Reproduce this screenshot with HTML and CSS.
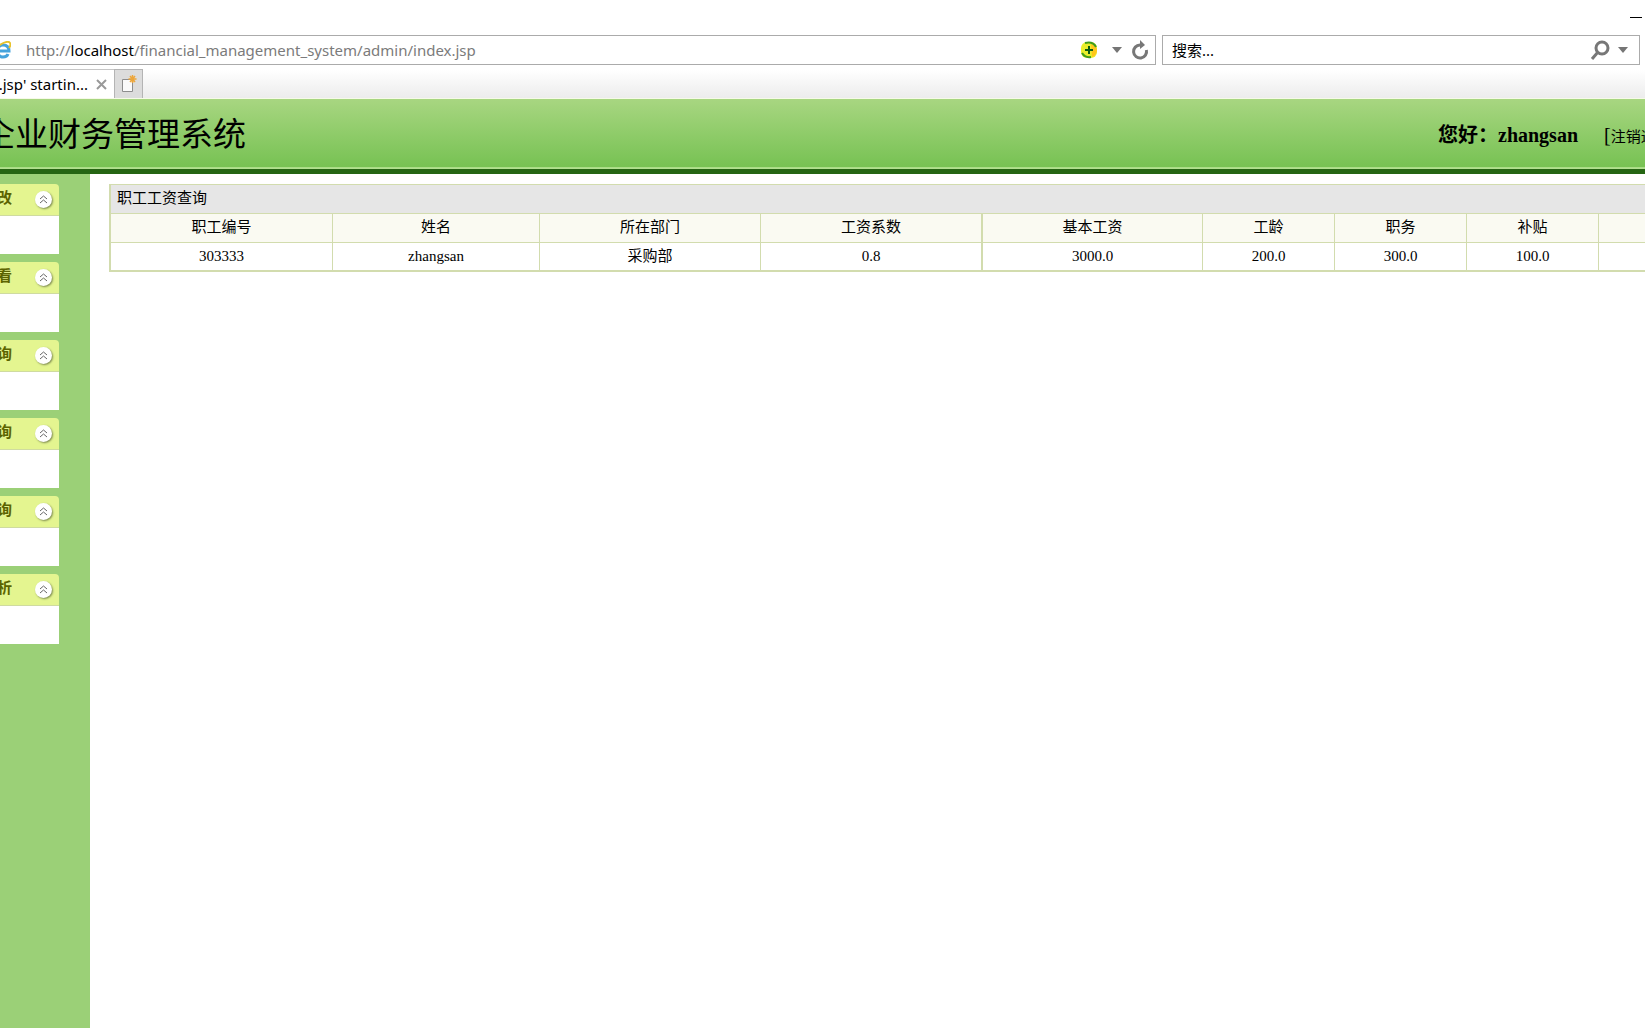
FILE: index.html
```html
<!DOCTYPE html>
<html lang="zh-CN">
<head>
<meta charset="utf-8">
<title>企业财务管理系统</title>
<link rel="stylesheet" href="styles.css">
</head>
<body>
<div class="window">
  <div class="titlebar">
    <button class="plain minimize" aria-label="最小化"></button>
  </div>
  <div class="toolbar">
    <div class="address">
      <svg class="ie" width="11" height="18" viewBox="0 0 11 18" aria-hidden="true">
        <path d="M-5 10H9Q9 4 3 4Q-2 4 -3 10Q-2 16 3 16Q7 16 8 13" fill="none" stroke="#46a3dc" stroke-width="3"/>
        <path d="M-3 6Q5 0 9 1Q12 3 9 7" fill="none" stroke="#e8c22c" stroke-width="2"/>
      </svg>
      <div class="url" role="textbox" aria-label="地址">http://<span class="host">localhost</span>/financial_management_system/admin/index.jsp</div>
      <button class="plain" aria-label="加速">
        <svg width="16" height="18" viewBox="0 0 16 18"><rect x="0" y="1" width="16" height="16" rx="6" fill="#e9ee2c"/><path d="M10 3Q16 5 16 10Q15 15 11 16Z" fill="#ffc61a"/><path d="M4 2Q12 0 15 6M1 12Q4 17 10 16" fill="none" stroke="#3f9c1c" stroke-width="2"/><path d="M8 5V13M4 9H12" stroke="#0c5c12" stroke-width="2"/></svg>
      </button>
      <button class="plain caret" aria-label="历史"><svg width="10" height="6" viewBox="0 0 10 6"><path d="M0 0H10L5 6Z" fill="#757575"/></svg></button>
      <button class="plain" aria-label="刷新">
        <svg width="18" height="20" viewBox="0 0 18 20"><path d="M9 5A6.500 6.500 0 1 0 15.400 10" fill="none" stroke="#777" stroke-width="3"/><path d="M9 0L14 5L9 9Z" fill="#777"/></svg>
      </button>
    </div>
    <form class="search">
      <input type="text" placeholder="搜索..." aria-label="搜索">
      <button class="plain" type="button" aria-label="搜索">
        <svg width="20" height="20" viewBox="0 0 20 20"><circle cx="12" cy="8" r="6" fill="none" stroke="#777" stroke-width="3"/><path d="M8 12L2 19" stroke="#777" stroke-width="3"/></svg>
      </button>
      <button class="plain" type="button" aria-label="搜索选项"><svg width="10" height="6" viewBox="0 0 10 6"><path d="M0 0H10L5 6Z" fill="#757575"/></svg></button>
    </form>
  </div>
  <div class="tabs">
    <div class="tab">
      <span>.jsp' startin...</span>
      <button class="plain" aria-label="关闭标签页"><svg width="11" height="11" viewBox="0 0 11 11"><path d="M1 1L10 10M10 1L1 10" stroke="#999" stroke-width="2"/></svg></button>
    </div>
    <button class="newtab" aria-label="新建标签页">
      <svg width="16" height="18" viewBox="0 0 16 18"><path d="M1.500 4.500H11.500V16.500H1.500Z" fill="#fafafa" stroke="#8d8d8d"/><path d="M11.500 0V8M7.500 4H15.500M9 1L14 7M14 1L9 7" stroke="#eda63a" stroke-width="1.500"/></svg>
    </button>
  </div>

  <header class="banner">
    <h1>企业财务管理系统</h1>
    <div class="user">
      <strong>您好：zhangsan</strong>
      <span class="session">[<a href="#">注销退出</a>]</span>
    </div>
  </header>

  <div class="page">
    <nav class="sidebar">
      <section class="panel"><h2>改</h2><button class="plain fold" aria-label="收起"><svg width="9" height="9" viewBox="0 0 9 9"><path d="M1 4L4.500 1L8 4M1 8L4.500 5L8 8"/></svg></button></section>
      <section class="panel"><h2>看</h2><button class="plain fold" aria-label="收起"><svg width="9" height="9" viewBox="0 0 9 9"><path d="M1 4L4.500 1L8 4M1 8L4.500 5L8 8"/></svg></button></section>
      <section class="panel"><h2>询</h2><button class="plain fold" aria-label="收起"><svg width="9" height="9" viewBox="0 0 9 9"><path d="M1 4L4.500 1L8 4M1 8L4.500 5L8 8"/></svg></button></section>
      <section class="panel"><h2>询</h2><button class="plain fold" aria-label="收起"><svg width="9" height="9" viewBox="0 0 9 9"><path d="M1 4L4.500 1L8 4M1 8L4.500 5L8 8"/></svg></button></section>
      <section class="panel"><h2>询</h2><button class="plain fold" aria-label="收起"><svg width="9" height="9" viewBox="0 0 9 9"><path d="M1 4L4.500 1L8 4M1 8L4.500 5L8 8"/></svg></button></section>
      <section class="panel"><h2>析</h2><button class="plain fold" aria-label="收起"><svg width="9" height="9" viewBox="0 0 9 9"><path d="M1 4L4.500 1L8 4M1 8L4.500 5L8 8"/></svg></button></section>
    </nav>
    <main>
      <table>
        <caption>职工工资查询</caption>
        <colgroup>
          <col class="wide"><col class="name"><col class="wide"><col class="wide"><col class="wide"><col class="narrow"><col class="narrow"><col class="narrow"><col>
        </colgroup>
        <thead>
          <tr><th>职工编号</th><th>姓名</th><th>所在部门</th><th>工资系数</th><th class="group">基本工资</th><th>工龄</th><th>职务</th><th>补贴</th><th></th></tr>
        </thead>
        <tbody>
          <tr><td>303333</td><td>zhangsan</td><td>采购部</td><td>0.8</td><td class="group">3000.0</td><td>200.0</td><td>300.0</td><td>100.0</td><td></td></tr>
        </tbody>
      </table>
    </main>
  </div>
</div>
</body>
</html>
```
FILE: styles.css
```css
* { box-sizing: border-box; }
body {
  margin: 0;
  background: #fff;
  color: #000;
  font-family: "Liberation Serif", "Noto Sans CJK SC", serif;
  font-size: 15px;
}
.window {
  display: flex;
  flex-direction: column;
  min-height: 100vh;
  overflow: hidden;
}
.plain {
  display: flex;
  align-items: center;
  justify-content: center;
  flex: none;
  padding: 0;
  border: 0;
  background: none;
}

/* browser chrome */
.titlebar {
  display: flex;
  justify-content: flex-end;
  height: 35px;
  padding: 17px 3px 0 0;
}
.minimize { width: 12px; height: 1px; background: #000; }
.toolbar {
  display: flex;
  gap: 6px;
  padding-right: 5px;
  font-family: "Noto Sans", "Noto Sans CJK SC", sans-serif;
}
.address, .search {
  display: flex;
  align-items: center;
  height: 30px;
  border: 1px solid #ababab;
}
.address {
  flex: 1149 1 0;
  min-width: 0;
  gap: 15px;
  padding-right: 6px;
  border-left: 0;
}
.address .caret + .plain { margin-left: -6px; }
.url {
  flex: 1;
  min-width: 0;
  overflow: hidden;
  color: #7b7b7b;
  line-height: 28px;
  white-space: nowrap;
}
.host { color: #000; }
.search {
  flex: 456 1 0;
  gap: 8px;
  padding: 0 11px 0 9px;
}
.search input {
  flex: 1;
  min-width: 0;
  padding: 0;
  border: 0;
  outline: 0;
  background: none;
  font: inherit;
}
.search input::placeholder { color: #000; opacity: 1; }
.tabs {
  display: flex;
  height: 34px;
  padding-top: 4px;
  border-bottom: 1px solid #f6fae8;
  background: linear-gradient(#fff 15%, #ececec);
  font-family: "Noto Sans", sans-serif;
  font-size: 15px;
}
.tab {
  display: flex;
  align-items: center;
  justify-content: flex-end;
  gap: 8px;
  width: 114px;
  padding-right: 7px;
  border-top: 1px solid #c6c6c6;
  background: #fff;
  white-space: nowrap;
}
.newtab {
  display: flex;
  align-items: center;
  justify-content: center;
  width: 29px;
  padding: 0;
  border: 1px solid #b4b4b4;
  border-bottom: 0;
  background: #dcdcdc;
}

/* page header */
.banner {
  display: flex;
  align-items: center;
  justify-content: space-between;
  height: 75px;
  padding-top: 2px;
  border-bottom: 5px solid #256513;
  background: linear-gradient(#a8d681, #77c253 97%, #b2e08f 98%);
}
h1 {
  display: flex;
  justify-content: flex-end;
  width: 246px;
  margin: 0;
  overflow: hidden;
  font-size: 33px;
  font-weight: 400;
  line-height: 48px;
  white-space: nowrap;
}
.user {
  display: flex;
  align-items: center;
  gap: 26px;
  width: 207px;
  overflow: hidden;
  white-space: nowrap;
}
.user strong { font-size: 20px; line-height: 30px; }
.session { font-size: 20px; }
.session a { color: #000; font-size: 15px; text-decoration: none; }

/* body */
.page { display: flex; flex: 1; }
.sidebar {
  display: flex;
  flex-direction: column;
  flex: none;
  gap: 8px;
  width: 90px;
  padding: 10px 31px 10px 0;
  background: #9bd077;
}
.panel {
  display: flex;
  align-items: flex-start;
  justify-content: space-between;
  height: 70px;
  padding-right: 7px;
  border-top-right-radius: 4px;
  background: linear-gradient(#e4f590 31px, #cfdba0 31px, #cfdba0 32px, #fff 32px);
}
.panel h2 {
  display: flex;
  justify-content: flex-end;
  width: 12px;
  margin: 0;
  overflow: hidden;
  color: #5c6400;
  font-size: 15px;
  line-height: 28px;
}
.fold {
  width: 17px;
  height: 17px;
  margin-top: 7px;
  border-radius: 50%;
  background: #fff;
  box-shadow: 1px 1px 2px #7d8a50;
}
.fold path { fill: none; stroke: #666; stroke-width: 1; }

main { flex: 1; min-width: 0; padding: 10px 0 0 19px; }
table {
  width: 100%;
  table-layout: fixed;
  border-collapse: separate;
  border-spacing: 0;
  border: solid #d2dcae;
  border-width: 0 0 1px 2px;
}
caption {
  height: 29px;
  padding-left: 6px;
  border: solid #d2dcae;
  border-width: 1px 0 0 2px;
  background: #e6e6e6;
  line-height: 27px;
  text-align: left;
}
.wide { width: 221px; }
.name { width: 207px; }
.narrow { width: 132px; }
th, td {
  height: 29px;
  padding: 0 0 2px;
  border: 0 solid #d2dcae;
  border-left-width: 1px;
  font-weight: 400;
  line-height: 24px;
  text-align: center;
}
th { border-top-width: 1px; background: #fafaf2; }
td { border-top-width: 1px; border-bottom-width: 1px; }
th:first-child, td:first-child { border-left-width: 0; }
.group { border-left-width: 2px; }
```
